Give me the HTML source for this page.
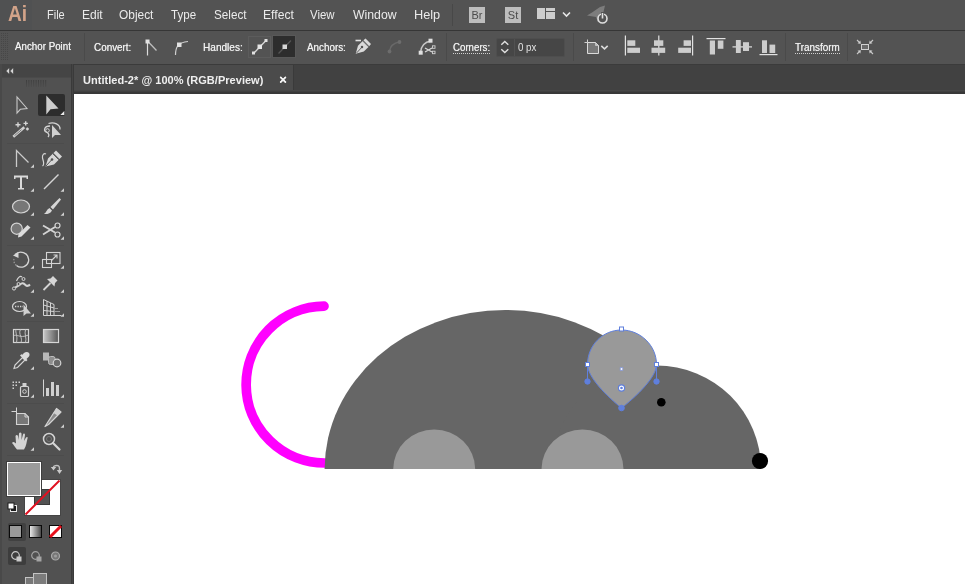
<!DOCTYPE html>
<html><head><meta charset="utf-8"><title>Untitled-2* @ 100% (RGB/Preview)</title>
<style>
*{box-sizing:border-box;margin:0;padding:0}
html,body{width:965px;height:584px;overflow:hidden;background:#535353;font-family:"Liberation Sans",sans-serif;color:#e8e8e8}
.abs,.abs *{position:absolute}
#app{position:relative;width:965px;height:584px;overflow:hidden;background:#535353;will-change:transform}
#menubar{left:0;top:0;width:965px;height:30px;background:#535353}
#menubar .mi{top:7.500px;font-size:13px;line-height:14px;white-space:nowrap;color:#ebebeb;transform-origin:0 50%}
#menuline{left:0;top:30px;width:965px;height:1px;background:#363636}
#ctrl{left:0;top:31px;width:965px;height:33px;background:#535353}
#ctrl .lb{top:9px;font-size:10.5px;line-height:13px;white-space:nowrap;color:#f2f2f2;text-shadow:0 0 0.7px #dcdcdc;transform-origin:0 50%}
#ctrl .ul{top:22px;height:0;border-bottom:1px dotted #cfcfcf}
#ctrl .lbn{text-shadow:none;color:#e2e2e2}
#ctrl .sep{top:2px;width:1px;height:28px;background:#4a4a4a}
#tabs{left:0;top:64px;width:965px;height:30px;background:#414141;border-top:1px solid #3b3b3b}
#tab{left:74px;top:0px;width:220px;height:28px;background:#4b4b4b;border-right:1px solid #3a3a3a}
#tabline{left:74px;top:90px;width:891px;height:4px;background:linear-gradient(#474747 0,#474747 1px,#404040 1px,#404040 2px,#383838 2px,#383838 4px)}
#tab .tt{left:9px;top:8px;font-size:11px;line-height:14px;font-weight:bold;color:#efefef;white-space:nowrap;letter-spacing:0.03px}
#tab .x{left:205.200px;top:7.800px;font-size:13px;line-height:14px;font-weight:bold;color:#f4f4f4;text-shadow:0 0 0.5px #fff}
#tools{left:0;top:64px;width:71px;height:520px;background:#515151}
#toolsedge{left:71px;top:64px;width:3px;height:520px;background:#444;border-left:1px solid #3a3a3a;border-right:1px solid #3a3a3a}
#canvas{left:74px;top:94px;width:891px;height:490px;background:#fff}
svg{overflow:visible}
</style></head>
<body>
<div id="app" class="abs">
  <div id="menubar">
    <div style="left:0;top:0;width:32px;height:30px;background:#505152"></div>
    <div id="ailogo" style="left:8px;top:2.700px;font-size:21.5px;line-height:22px;font-weight:bold;color:#d2a389;transform-origin:0 50%;transform:scaleX(0.89)">Ai</div>
    <div class="mi" style="left:46.95px;transform:scaleX(0.845)">File</div>
    <div class="mi" style="left:81.68px;transform:scaleX(0.924)">Edit</div>
    <div class="mi" style="left:119.40px;transform:scaleX(0.916)">Object</div>
    <div class="mi" style="left:171.30px;transform:scaleX(0.889)">Type</div>
    <div class="mi" style="left:213.50px;transform:scaleX(0.900)">Select</div>
    <div class="mi" style="left:262.67px;transform:scaleX(0.934)">Effect</div>
    <div class="mi" style="left:310.00px;transform:scaleX(0.879)">View</div>
    <div class="mi" style="left:353.20px;transform:scaleX(0.943)">Window</div>
    <div class="mi" style="left:413.52px;transform:scaleX(0.980)">Help</div>
    <div style="left:452px;top:4px;width:1px;height:22px;background:#484848"></div>
    <div style="left:469px;top:7px;width:16px;height:16px;background:#bdbdbd;color:#4c4c4c;font-size:11px;line-height:16px;text-align:center"><span style="position:static">Br</span></div>
    <div style="left:505px;top:7px;width:16px;height:16px;background:#bdbdbd;color:#4c4c4c;font-size:11px;line-height:16px;text-align:center"><span style="position:static">St</span></div>
    <svg style="left:536.500px;top:8px" width="34" height="12" viewBox="0 0 34 12">
      <rect x="0" y="0" width="8" height="11" fill="#cdcdcd"/>
      <rect x="9" y="0" width="9" height="3" fill="#cdcdcd"/>
      <rect x="9" y="4" width="9" height="7" fill="#cdcdcd"/>
      <path d="M26 4.5 L29.5 8 L33 4.5" fill="none" stroke="#e6e6e6" stroke-width="1.6"/>
    </svg>
    <svg style="left:585px;top:4px" width="26" height="22" viewBox="0 0 26 22">
      <path d="M2 11.500 L7 8.500 L15 3 L20 1.500 L18.500 8 L13 18.500 L11 13 Z" fill="#7d7d7d"/>
      <circle cx="17.500" cy="14.500" r="4.500" fill="#535353" stroke="#e0e0e0" stroke-width="1.6"/>
      <rect x="16" y="8" width="3" height="6" fill="#535353"/>
      <path d="M17.500 9 V14.500" stroke="#e0e0e0" stroke-width="1.6"/>
    </svg>
  </div>
  <div id="menuline"></div>
  <div id="ctrl">
    <svg style="left:1px;top:2px" width="8" height="28" viewBox="0 0 8 28"><g fill="#474747"><rect x="0" y="0" width="1" height="28"/><rect x="2" y="0" width="1" height="28"/><rect x="4" y="0" width="1" height="28"/><rect x="6" y="0" width="1" height="28"/></g><g fill="#535353"><rect x="0" y="1" width="8" height="1"/><rect x="0" y="3" width="8" height="1"/><rect x="0" y="5" width="8" height="1"/><rect x="0" y="7" width="8" height="1"/><rect x="0" y="9" width="8" height="1"/><rect x="0" y="11" width="8" height="1"/><rect x="0" y="13" width="8" height="1"/><rect x="0" y="15" width="8" height="1"/><rect x="0" y="17" width="8" height="1"/><rect x="0" y="19" width="8" height="1"/><rect x="0" y="21" width="8" height="1"/><rect x="0" y="23" width="8" height="1"/><rect x="0" y="25" width="8" height="1"/><rect x="0" y="27" width="8" height="1"/></g></svg>
    <div class="lb" style="left:15.40px;top:9.26px;transform:scaleX(0.930)">Anchor Point</div>
    <div class="sep" style="left:84px"></div>
    <div class="lb" style="left:94.30px;top:10.16px;transform:scaleX(0.941)">Convert:</div>
    <svg style="left:142px;top:5px" width="18" height="22" viewBox="0 0 18 22">
      <path d="M5.500 5 V19.500" stroke="#dcdcdc" stroke-width="1.200" fill="none"/>
      <path d="M5.500 5 L14.500 14.500" stroke="#bdbdbd" stroke-width="1.300" fill="none"/>
      <rect x="3.500" y="3.500" width="4" height="4" fill="#e2e2e2"/>
    </svg>
    <svg style="left:171px;top:5px" width="20" height="22" viewBox="0 0 20 22">
      <path d="M4.500 19 C4.500 11 7 6.500 17 5.500" stroke="#cfcfcf" stroke-width="1.200" fill="none"/>
      <rect x="6" y="6.500" width="4.500" height="4.500" fill="#e2e2e2"/>
    </svg>
    <div class="lb" style="left:203.04px;top:10.16px;transform:scaleX(0.960)">Handles:</div>
    <div style="left:248px;top:5px;width:23px;height:22px;border:1px solid #5c5c5c"></div>
    <svg style="left:249px;top:5px" width="22" height="22" viewBox="0 0 22 22">
      <path d="M4.500 17.500 L17 4.500" stroke="#d8d8d8" stroke-width="1.300" fill="none"/>
      <rect x="8.500" y="8.500" width="4.500" height="4.500" fill="#e6e6e6"/>
      <rect x="3" y="15.500" width="3" height="3" fill="#e0e0e0"/>
      <rect x="15.500" y="3" width="3" height="3" fill="#e0e0e0"/>
    </svg>
    <div style="left:272px;top:4px;width:24px;height:23px;background:#2d2d2d;border:1px solid #585858"></div>
    <svg style="left:274px;top:5px" width="22" height="22" viewBox="0 0 22 22">
      <path d="M4.500 17.500 L17 4.500" stroke="#555" stroke-width="1.300" fill="none"/>
      <rect x="8.500" y="8.500" width="4.500" height="4.500" fill="#d6d6d6"/>
    </svg>
    <div class="lb" style="left:307.20px;top:10.16px;transform:scaleX(0.937)">Anchors:</div>
    <svg style="left:353px;top:5px" width="24" height="24" viewBox="0 0 24 24">
      <path d="M2.500 4.500 H8" stroke="#e0e0e0" stroke-width="1.600"/>
      <g transform="translate(-1.800 0.300) scale(0.900)">
      <path d="M5 19.500 L7.500 10.500 L13 5 L19.500 11.500 L14 17 Z" fill="#dadada"/>
      <path d="M13.500 4.500 L16 2.500 L22 8.500 L20 11 Z" fill="#dadada"/>
      <path d="M6 18.500 L11.500 12.500" stroke="#535353" stroke-width="1"/>
      <circle cx="12" cy="12" r="1.400" fill="#535353"/>
      <path d="M12.800 5.200 L19.300 11.700" stroke="#535353" stroke-width="0.900"/>
      </g>
    </svg>
    <svg style="left:385px;top:5.500px" width="20" height="20" viewBox="0 0 20 20">
      <path d="M4.500 14.500 C5 9.500 8 6 14.500 5" stroke="#696969" stroke-width="1.300" fill="none"/>
      <circle cx="4.500" cy="14.500" r="1.900" fill="#6d6d6d"/>
      <circle cx="14.500" cy="5" r="1.900" fill="#6d6d6d"/>
    </svg>
    <svg style="left:415px;top:5px" width="24" height="24" viewBox="0 0 24 24">
      <path d="M5.500 16.500 C6 10.500 9.500 6 16 5" stroke="#c8c8c8" stroke-width="1.300" fill="none"/>
      <rect x="13.500" y="2.700" width="4" height="4" fill="#e0e0e0"/>
      <rect x="3.700" y="14.700" width="4" height="4" fill="#e0e0e0"/>
      <path d="M10 12 L17 16 M10 16 L17 12" stroke="#d8d8d8" stroke-width="1.300" fill="none"/>
      <rect x="17.500" y="9.800" width="2.500" height="2.500" fill="none" stroke="#d0d0d0" stroke-width="0.900"/>
      <rect x="17.500" y="15.200" width="2.500" height="2.500" fill="none" stroke="#d0d0d0" stroke-width="0.900"/>
    </svg>
    <div class="sep" style="left:446px"></div>
    <div class="ul" style="left:453px;width:37px"></div>
    <div class="ul" style="left:795px;width:45px"></div>
    <div class="lb lbu" style="left:452.90px;top:10.16px;transform:scaleX(0.923)">Corners:</div>
    <div style="left:496px;top:7px;width:69px;height:19px;background:#464646;border:1px solid #4e4e4e;border-radius:2px"></div>
    <svg style="left:499px;top:8px" width="12" height="18" viewBox="0 0 12 18">
      <path d="M2.300 5.800 L5.800 2.500 L9.300 5.800" stroke="#e0e0e0" stroke-width="1.400" fill="none"/>
      <path d="M2.300 10.200 L5.800 13.500 L9.300 10.200" stroke="#e0e0e0" stroke-width="1.400" fill="none"/>
    </svg>
    <div style="left:514px;top:8px;width:1px;height:17px;background:#515151"></div>
    <div class="lb lbn" style="left:518.00px;top:10.16px;transform:scaleX(0.925)">0 px</div>
    <div class="sep" style="left:573px"></div>
    <svg style="left:584px;top:5px" width="28" height="24" viewBox="0 0 28 24">
      <path d="M3.500 3.500 V6.500 M0.500 6.500 H3.500" stroke="#cfcfcf" stroke-width="1" fill="none"/>
      <path d="M3.500 6.500 H11.500 L14.500 9.500 V17.500 H3.500 Z" fill="#777" stroke="#dadada" stroke-width="1"/>
      <path d="M11.500 6.500 V9.500 H14.500 Z" fill="#bdbdbd" stroke="#dadada" stroke-width="0.600"/>
      <path d="M17.300 9.800 L20.500 12.800 L23.700 9.800" stroke="#dcdcdc" stroke-width="1.600" fill="none"/>
    </svg>
    <svg style="left:620px;top:0px" width="160" height="33" viewBox="0 0 160 33"><rect x="4.8" y="4.5" width="1.2" height="20.0" fill="#e2e2e2"/><rect x="7.3" y="9.3" width="8.0" height="5.6" fill="#cdcdcd"/><rect x="7.3" y="16.7" width="12.7" height="5.2" fill="#cdcdcd"/><rect x="38.2" y="4.5" width="1.2" height="20.0" fill="#e2e2e2"/><rect x="34.0" y="9.3" width="9.3" height="5.6" fill="#cdcdcd"/><rect x="31.5" y="16.7" width="13.7" height="5.2" fill="#cdcdcd"/><rect x="72.0" y="4.5" width="1.2" height="20.0" fill="#e2e2e2"/><rect x="63.6" y="9.3" width="7.4" height="5.6" fill="#cdcdcd"/><rect x="58.2" y="16.7" width="12.8" height="5.2" fill="#cdcdcd"/><rect x="86.5" y="7.0" width="19.0" height="1.2" fill="#e2e2e2"/><rect x="89.8" y="9.5" width="5.2" height="14.0" fill="#cdcdcd"/><rect x="97.8" y="9.5" width="5.6" height="8.3" fill="#cdcdcd"/><rect x="112.5" y="15.3" width="19.5" height="1.2" fill="#e2e2e2"/><rect x="115.9" y="9.0" width="4.9" height="13.0" fill="#cdcdcd"/><rect x="123.0" y="11.2" width="6.0" height="8.8" fill="#cdcdcd"/><rect x="139.5" y="23.0" width="18.0" height="1.2" fill="#e2e2e2"/><rect x="142.0" y="9.3" width="5.0" height="12.7" fill="#cdcdcd"/><rect x="149.5" y="13.6" width="5.7" height="8.4" fill="#cdcdcd"/></svg>
    <div class="sep" style="left:785px"></div>
    <div class="lb lbu" style="left:795.20px;top:10.16px;transform:scaleX(0.943)">Transform</div>
    <div class="sep" style="left:847px"></div>
    <svg style="left:856px;top:8px" width="18" height="16" viewBox="0 0 18 16">
      <rect x="5.500" y="5.500" width="7" height="5" fill="#6a6a6a" stroke="#d0d0d0" stroke-width="1"/>
      <path d="M1 1 L4.500 4.500 M17 1 L13.500 4.500 M1 15 L4.500 11.500 M17 15 L13.500 11.500" stroke="#c8c8c8" stroke-width="1.100"/>
      <path d="M1.500 4.500 H4.500 V1.500 Z M16.500 4.500 H13.500 V1.500 Z M1.500 11.500 H4.500 V14.500 Z M16.500 11.500 H13.500 V14.500 Z" fill="#d0d0d0"/>
    </svg>
  </div>
  <div id="tabs">
    <div id="tab"><div class="tt">Untitled-2* @ 100% (RGB/Preview)</div><div class="x">×</div></div>
  </div>
  <div id="tools">
    <div style="left:0;top:0;width:71px;height:13px;background:#454545"></div>
    <svg style="left:5px;top:4px" width="10" height="8" viewBox="0 0 10 8"><path d="M4 0.500 L1.500 3 L4 5.500 Z M8 0.500 L5.500 3 L8 5.500 Z" fill="#d8d8d8" stroke="#d8d8d8" stroke-width="0.300"/></svg>
    <div style="left:0;top:13px;width:72px;height:1px;background:#4a4a4a"></div>
    <svg style="left:26px;top:16px" width="22" height="7" viewBox="0 0 22 7"><defs><linearGradient id="grp" x1="0" y1="0" x2="0" y2="1"><stop offset="0" stop-color="#3e3e3e"/><stop offset="1" stop-color="#4c4c4c"/></linearGradient></defs><rect x="0.0" y="0" width="1" height="7" fill="url(#grp)"/><rect x="2.4" y="0" width="1" height="7" fill="url(#grp)"/><rect x="4.8" y="0" width="1" height="7" fill="url(#grp)"/><rect x="7.2" y="0" width="1" height="7" fill="url(#grp)"/><rect x="9.6" y="0" width="1" height="7" fill="url(#grp)"/><rect x="12.0" y="0" width="1" height="7" fill="url(#grp)"/><rect x="14.4" y="0" width="1" height="7" fill="url(#grp)"/><rect x="16.8" y="0" width="1" height="7" fill="url(#grp)"/><rect x="19.2" y="0" width="1" height="7" fill="url(#grp)"/></svg>
    <div style="left:0;top:0;width:2px;height:520px;background:#494949"></div>
    <div style="left:37.500px;top:30px;width:27px;height:21.500px;background:#2d2d2d;border-radius:2px"></div>
    <svg style="left:6px;top:28px" width="30" height="26" viewBox="0 0 30 26"><path d="M11 5 V21 L14.300 17.300 L21 16.500 Z" fill="none" stroke="#c8c8c8" stroke-width="1.100" stroke-linejoin="miter"/></svg>
    <svg style="left:36px;top:28px" width="30" height="26" viewBox="0 0 30 26"><path d="M10.300 3.500 V22.500 L14.500 17.300 L22.500 16.500 Z" fill="#cdcdcd"/><path d="M28.300 19 V23 H24.300 Z" fill="#eaeaea"/></svg>
    <svg style="left:6px;top:53px" width="30" height="26" viewBox="0 0 30 26"><path d="M7.300 19.700 L18.300 10.300" stroke="#d4d4d4" stroke-width="2.500" stroke-linecap="butt"/><path d="M8.500 18.700 L15.500 12.700" stroke="#535353" stroke-width="0.700"/><path d="M12 5.200 V10.200 M9.500 7.700 H14.500 M19.700 4.200 V8.600 M17.500 6.400 H21.900 M21.400 10.500 V13.500 M19.900 12 H22.900" stroke="#d4d4d4" stroke-width="1.400"/></svg>
    <svg style="left:36px;top:53px" width="30" height="26" viewBox="0 0 30 26"><path d="M14 9 C8 9 7 14 11 15.500 C13 16.500 13.500 18.500 12 20 M12.500 6.500 C18 4.500 24.500 7.500 24 12.500" fill="none" stroke="#d4d4d4" stroke-width="1.300"/><circle cx="11.500" cy="13.500" r="1.800" fill="none" stroke="#d4d4d4" stroke-width="1"/><path d="M16 8 V21 L19 18 H25 Z" fill="#d0d0d0"/></svg>
    <svg style="left:6px;top:81px" width="30" height="26" viewBox="0 0 30 26"><path d="M10.500 22 V5.500 L22.500 17.500" fill="none" stroke="#cbcbcb" stroke-width="1.300" stroke-linejoin="miter"/><path d="M28 19.3 V22.8 H24.5 Z" fill="#d0d0d0"/></svg>
    <svg style="left:36px;top:81px" width="30" height="26" viewBox="0 0 30 26"><path d="M6.500 21 C9 19.500 7 15 6.500 13 C6 9.500 8 8 10 9" fill="none" stroke="#d4d4d4" stroke-width="1.200"/><path d="M9.500 21.500 L12 13.500 L17 8.500 L23 14.500 L18 19.500 Z" fill="#d6d6d6"/><path d="M17.500 8 L20 5.500 L26 11.500 L23.500 14 Z" fill="#d6d6d6"/><path d="M10 21 L15.500 15" stroke="#535353" stroke-width="1"/><circle cx="16" cy="14.500" r="1.300" fill="#535353"/><path d="M16.800 8.800 L22.800 14.800" stroke="#535353" stroke-width="0.900"/></svg>
    <svg style="left:6px;top:105px" width="30" height="26" viewBox="0 0 30 26"><path d="M8 6.500 H22 V10 H20.500 V8.500 H16 V19 H18 V20.500 H12 V19 H14 V8.500 H9.500 V10 H8 Z" fill="#dadada"/><path d="M28 19.3 V22.8 H24.5 Z" fill="#d0d0d0"/></svg>
    <svg style="left:36px;top:105px" width="30" height="26" viewBox="0 0 30 26"><path d="M8 20 L22.500 5.500" stroke="#d4d4d4" stroke-width="1.500"/><path d="M28 19.3 V22.8 H24.5 Z" fill="#d0d0d0"/></svg>
    <svg style="left:6px;top:129px" width="30" height="26" viewBox="0 0 30 26"><ellipse cx="15" cy="13.500" rx="8.500" ry="6.500" fill="#777" stroke="#d4d4d4" stroke-width="1.200"/><path d="M28 19.3 V22.8 H24.5 Z" fill="#d0d0d0"/></svg>
    <svg style="left:36px;top:129px" width="30" height="26" viewBox="0 0 30 26"><path d="M23.500 5 L25 6.500 L17 16.500 L14.500 14 Z" fill="#d6d6d6"/><path d="M13.500 15 L16 17.500 C14.500 20.500 11 21.500 8 21 C10.500 19.500 10.500 16.500 13.500 15 Z" fill="#d6d6d6"/><path d="M28 19.3 V22.8 H24.5 Z" fill="#d0d0d0"/></svg>
    <svg style="left:6px;top:153px" width="30" height="26" viewBox="0 0 30 26"><circle cx="10.700" cy="11.700" r="5.600" fill="#777" stroke="#d4d4d4" stroke-width="1.200"/><path d="M12 20.500 L12.500 17 L21.500 8 L24.500 10.500 L15.500 19.500 Z" fill="#dcdcdc"/><path d="M28 19.3 V22.8 H24.5 Z" fill="#d0d0d0"/></svg>
    <svg style="left:36px;top:153px" width="30" height="26" viewBox="0 0 30 26"><path d="M7 8.500 L19 15.500 M7 17.500 L19 10" stroke="#d4d4d4" stroke-width="1.800" fill="none"/><circle cx="21.500" cy="8.500" r="2.500" fill="none" stroke="#d4d4d4" stroke-width="1.200"/><circle cx="21.500" cy="17.500" r="2.500" fill="none" stroke="#d4d4d4" stroke-width="1.200"/><path d="M28 19.3 V22.8 H24.5 Z" fill="#d0d0d0"/></svg>
    <svg style="left:6px;top:182px" width="30" height="26" viewBox="0 0 30 26"><path d="M9 8.500 C15 3 24 8 22.500 15.500 C21.500 20.500 15 23 10.500 19.500" fill="none" stroke="#d4d4d4" stroke-width="1.300" stroke-dasharray="9 0"/><path d="M7 9.500 L12.500 6 L12.500 12 Z" fill="#d6d6d6"/><path d="M10.500 19.500 C8 17.500 7.500 15 8 13" fill="none" stroke="#9a9a9a" stroke-width="1.200" stroke-dasharray="1.500 1.500"/><path d="M28 19.3 V22.8 H24.5 Z" fill="#d0d0d0"/></svg>
    <svg style="left:36px;top:182px" width="30" height="26" viewBox="0 0 30 26"><rect x="6.500" y="13.500" width="9" height="8" fill="none" stroke="#d4d4d4" stroke-width="1.100"/><rect x="10.500" y="6.500" width="13.500" height="11" fill="none" stroke="#d4d4d4" stroke-width="1.100"/><path d="M15.500 14.500 L20.500 9.500 M17.500 9 H21 V12.500" fill="none" stroke="#d4d4d4" stroke-width="1.100"/><path d="M28 19.3 V22.8 H24.5 Z" fill="#d0d0d0"/></svg>
    <svg style="left:6px;top:206px" width="30" height="26" viewBox="0 0 30 26"><path d="M9 18 C11 15.500 12 16.500 14 14.500 C16 12.500 17.500 13 19.500 15 C21 16.500 22.500 16 24 14.500" fill="none" stroke="#d4d4d4" stroke-width="2"/><path d="M10.500 11 C12 7.500 14 5.500 16 7" fill="none" stroke="#d4d4d4" stroke-width="1.200"/><circle cx="8" cy="18.500" r="1.600" fill="#535353" stroke="#d4d4d4" stroke-width="1"/><circle cx="12.500" cy="14" r="1.500" fill="#535353" stroke="#d4d4d4" stroke-width="1"/><circle cx="17.500" cy="9" r="1.500" fill="#535353" stroke="#d4d4d4" stroke-width="1"/><path d="M28 19.3 V22.8 H24.5 Z" fill="#d0d0d0"/></svg>
    <svg style="left:36px;top:206px" width="30" height="26" viewBox="0 0 30 26"><path d="M14.500 8.500 L17 6 L21.500 10.500 L19 13 L18.500 16.500 L11 9 Z" fill="#d6d6d6"/><path d="M14.500 13 L7.500 20" stroke="#d4d4d4" stroke-width="1.800"/><path d="M28 19.3 V22.8 H24.5 Z" fill="#d0d0d0"/></svg>
    <svg style="left:6px;top:230px" width="30" height="26" viewBox="0 0 30 26"><ellipse cx="13.500" cy="12.500" rx="7" ry="5" fill="none" stroke="#d4d4d4" stroke-width="1.200"/><path d="M9 12.500 H17" stroke="#d4d4d4" stroke-width="1.300" stroke-dasharray="1.300 1.200"/><path d="M17.500 10.500 V22 L20.500 19.500 H25 Z" fill="#d0d0d0"/><path d="M28 19.3 V22.8 H24.5 Z" fill="#d0d0d0"/></svg>
    <svg style="left:36px;top:230px" width="30" height="26" viewBox="0 0 30 26"><path d="M7.500 5.500 V21.500 H25.500 M7.500 5.500 L18 10.500 V21.500 M7.500 11 L18 14 M7.500 16.500 L18 17.500 M11 7 V21.500 M14.500 9 V21.500" fill="none" stroke="#d4d4d4" stroke-width="1"/><path d="M18 17.500 H24 M18 14.500 H22" fill="none" stroke="#9c9c9c" stroke-width="1"/><path d="M28 19.3 V22.8 H24.5 Z" fill="#d0d0d0"/></svg>
    <svg style="left:6px;top:259px" width="30" height="26" viewBox="0 0 30 26"><rect x="7.500" y="6.500" width="15" height="13" fill="none" stroke="#d4d4d4" stroke-width="1.200"/><path d="M7.500 13 C11 10 13 16 22.500 12 M14.500 6.500 C12 11 17 15 15 19.500 M10 6.500 C9 10 12 12 10.500 19.500 M19.500 6.500 C18 11 21 15 19.500 19.500" fill="none" stroke="#c0c0c0" stroke-width="1"/></svg>
    <svg style="left:36px;top:259px" width="30" height="26" viewBox="0 0 30 26"><defs><linearGradient id="gr1" x1="0" x2="1"><stop offset="0" stop-color="#c8c8c8"/><stop offset="1" stop-color="#555"/></linearGradient></defs><rect x="7.500" y="6.500" width="15" height="13" fill="url(#gr1)" stroke="#d6d6d6" stroke-width="1.200"/></svg>
    <svg style="left:6px;top:283px" width="30" height="26" viewBox="0 0 30 26"><path d="M8 21.500 L9 18 L16.500 10.500 L19 13 L11.500 20.500 Z" fill="none" stroke="#d4d4d4" stroke-width="1.200"/><path d="M16 8 L18 6 C19.500 4.500 22 4.500 23 6 C24 7.500 23.500 9 22.500 10 L20.500 12 L21.500 13 L20 14.500 L14 8.500 L15.500 7 Z" fill="#d8d8d8"/><path d="M28 19.3 V22.8 H24.5 Z" fill="#d0d0d0"/></svg>
    <svg style="left:36px;top:283px" width="30" height="26" viewBox="0 0 30 26"><rect x="7" y="5.500" width="6" height="8" fill="#b8b8b8"/><rect x="12.500" y="9.500" width="6.500" height="8" rx="2" fill="#8e8e8e" stroke="#bdbdbd" stroke-width="1"/><circle cx="21" cy="16" r="3.800" fill="#6a6a6a" stroke="#d4d4d4" stroke-width="1.200"/></svg>
    <svg style="left:6px;top:311px" width="30" height="26" viewBox="0 0 30 26"><rect x="14.500" y="11.500" width="8" height="10" rx="1" fill="none" stroke="#d4d4d4" stroke-width="1.200"/><rect x="16.500" y="8" width="4" height="3" fill="#d0d0d0"/><circle cx="18.500" cy="16.500" r="1.800" fill="none" stroke="#d4d4d4" stroke-width="1"/><g fill="#d0d0d0"><rect x="6.500" y="6.500" width="1.500" height="1.500"/><rect x="9.500" y="6.500" width="1.500" height="1.500"/><rect x="12.500" y="6.500" width="1.500" height="1.500"/><rect x="6.500" y="9.500" width="1.500" height="1.500"/><rect x="9.500" y="9.500" width="1.500" height="1.500"/><rect x="6.500" y="12.500" width="1.500" height="1.500"/></g><path d="M28 19.3 V22.8 H24.5 Z" fill="#d0d0d0"/></svg>
    <svg style="left:36px;top:311px" width="30" height="26" viewBox="0 0 30 26"><path d="M7.500 4.500 V21.500" stroke="#d4d4d4" stroke-width="1"/><rect x="10" y="13" width="3" height="8" fill="#d0d0d0"/><rect x="15" y="7" width="3" height="14" fill="#d0d0d0"/><rect x="20" y="10" width="3" height="11" fill="#d0d0d0"/><path d="M28 19.3 V22.8 H24.5 Z" fill="#d0d0d0"/></svg>
    <svg style="left:6px;top:341px" width="30" height="26" viewBox="0 0 30 26"><path d="M10.500 2.500 V8 M5.500 6.500 H11" stroke="#d4d4d4" stroke-width="1" fill="none"/><path d="M10.500 8.500 H19 L22.500 12 V19.500 H10.500 Z" fill="#777" stroke="#d4d4d4" stroke-width="1.100"/><path d="M19 8.500 V12 H22.500" fill="none" stroke="#d4d4d4" stroke-width="1"/></svg>
    <svg style="left:36px;top:341px" width="30" height="26" viewBox="0 0 30 26"><path d="M20.500 3.500 L25 7 L12.500 19.500 L9 21.500 Z" fill="#8a8a8a" stroke="#d4d4d4" stroke-width="1.200" stroke-linejoin="round"/><path d="M20.500 3.500 L25 7 L21.500 10.500 L17.500 8 Z" fill="#d0d0d0"/><path d="M28 19.3 V22.8 H24.5 Z" fill="#d0d0d0"/></svg>
    <svg style="left:6px;top:364px" width="30" height="26" viewBox="0 0 30 26"><path d="M11 21.500 C9 19 7.500 16.500 6 15 C7 13.500 8.500 14 10 15.500 L9.500 8 C10 6.500 11.500 6.500 12 8 L12.500 12 L13 5.500 C13.500 4 15 4 15.500 5.500 L15.500 12 L17 6.500 C17.500 5 19 5.500 19 7 L18 13 L20 9.500 C21 8.500 22 9 21.500 10.500 C20.500 14 20.500 18 18 21.500 Z" fill="#d4d4d4"/><path d="M28 19.3 V22.8 H24.5 Z" fill="#d0d0d0"/></svg>
    <svg style="left:36px;top:364px" width="30" height="26" viewBox="0 0 30 26"><circle cx="13" cy="11" r="5.500" fill="none" stroke="#d4d4d4" stroke-width="1.500"/><circle cx="13" cy="11" r="2.500" fill="none" stroke="#777" stroke-width="1"/><path d="M17 15 L23.500 21.500" stroke="#d4d4d4" stroke-width="2.200" stroke-linecap="round"/></svg>
    <div style="left:23.500px;top:414.500px;width:37px;height:37px;background:#fff;border:1px solid #454545"></div>
    <div style="left:34px;top:425px;width:16px;height:16px;background:#535353;border:1px solid #3a3a3a"></div>
    <svg style="left:24.500px;top:415.500px" width="35" height="35" viewBox="0 0 35 35"><path d="M0.500 34.500 L34.500 0.500" stroke="#e01020" stroke-width="2"/></svg>
    <div style="left:6px;top:397px;width:36px;height:36px;background:#3e3e3e"></div>
    <div style="left:7px;top:398px;width:34px;height:34px;background:#9b9b9b;border:1px solid #fff"></div>
    <svg style="left:49.5px;top:398.5px" width="14" height="14" viewBox="0 0 14 14"><path d="M3.500 4.500 C3.500 2.500 5 2.500 7 2.500 C9.500 2.500 9.500 4 9.500 7.500" fill="none" stroke="#c0c0c0" stroke-width="1.400"/><path d="M0.800 4 H6.200 L3.500 7.500 Z M6.800 7 H12.200 L9.500 11 Z" fill="#c8c8c8"/></svg>
    <svg style="left:5px;top:436px" width="14" height="14" viewBox="0 0 14 14"><rect x="5.500" y="5.500" width="6" height="6" fill="#1c1c1c" stroke="#e8e8e8" stroke-width="1"/><rect x="3" y="3" width="6" height="6" fill="#fff" stroke="#1c1c1c" stroke-width="1"/></svg>
    <div style="left:7.500px;top:458.500px;width:18px;height:18px;background:#414141;border-radius:2px"></div>
    <div style="left:9px;top:460.500px;width:13px;height:13px;background:#9a9a9a;border:1px solid #0a0a0a"></div>
    <div style="left:29px;top:460.500px;width:13px;height:13px;background:linear-gradient(90deg,#e8e8e8,#4a4a4a);border:1px solid #0a0a0a"></div>
    <div style="left:49px;top:460.500px;width:13px;height:13px;background:#fff;border:1px solid #0a0a0a;overflow:hidden"></div>
    <svg style="left:50px;top:461.500px" width="11" height="11" viewBox="0 0 11 11"><path d="M0 11 L11 0" stroke="#e8101c" stroke-width="3"/></svg>
    <div style="left:7.500px;top:483px;width:18px;height:17.500px;background:#3d3d3d;border-radius:2px"></div>
    <svg style="left:10px;top:486px" width="14" height="14" viewBox="0 0 14 14"><circle cx="5.500" cy="5.500" r="3.800" fill="none" stroke="#cacaca" stroke-width="1.200"/><rect x="6.500" y="6.500" width="5" height="5" fill="#cacaca"/></svg>
    <svg style="left:30px;top:486px" width="14" height="14" viewBox="0 0 14 14"><circle cx="5.500" cy="5.500" r="3.800" fill="none" stroke="#a4a4a4" stroke-width="1.200"/><rect x="6.500" y="6.500" width="5" height="5" fill="#a4a4a4"/></svg>
    <svg style="left:49px;top:486px" width="14" height="14" viewBox="0 0 14 14"><circle cx="6.500" cy="6" r="4" fill="#777" stroke="#a8a8a8" stroke-width="1.200"/><circle cx="6.500" cy="6" r="1.600" fill="#9c9c9c"/></svg>
    <svg style="left:24px;top:507.5px" width="26" height="13" viewBox="0 0 26 13"><rect x="1.500" y="5.500" width="9" height="9" fill="#777" stroke="#c4c4c4" stroke-width="1"/><rect x="9.500" y="1.500" width="13" height="13" fill="#7c7c7c" stroke="#c4c4c4" stroke-width="1"/></svg>
    <div style="left:7px;top:79px;width:57px;height:1px;background:#4c4c4c"></div>
    <div style="left:7px;top:180.5px;width:57px;height:1px;background:#4c4c4c"></div>
    <div style="left:7px;top:257px;width:57px;height:1px;background:#4c4c4c"></div>
    <div style="left:7px;top:338.5px;width:57px;height:1px;background:#4c4c4c"></div>
    <div style="left:7px;top:391px;width:57px;height:1px;background:#4c4c4c"></div>
  </div>
  <div id="toolsedge"></div>
  <div id="tabline"></div>
  <div id="canvas">
    <svg style="left:-74px;top:-94px" width="965" height="584" viewBox="0 0 965 584">
      <path d="M324 306.200 A78.600 78.400 0 0 0 325.500 463" fill="none" stroke="#ff00ff" stroke-width="9.700" stroke-linecap="round"/>
      <path d="M324.600 469 A180.700 159 0 0 1 686 469 Z" fill="#666666"/>
      <path d="M552 469 A104.500 103.500 0 0 1 761 469 Z" fill="#666666"/>
      <path d="M393.200 469 A41 39.500 0 0 1 475.200 469 Z" fill="#999999"/>
      <path d="M541.500 469 A41 39.500 0 0 1 623.500 469 Z" fill="#999999"/>
      <circle cx="661.300" cy="402.200" r="4.300" fill="#000"/>
      <circle cx="760" cy="461" r="8.100" fill="#000"/>
      <path d="M621.500 330 C640.500 330 656.500 345.500 656.500 364.500 C656.500 381.500 621.500 408 621.500 408 C621.500 408 587.500 381.500 587.500 364.500 C587.500 345.500 602.500 330 621.500 330 Z" fill="#999999" stroke="#5f7fdc" stroke-width="1"/>
      <g stroke="#5f7fdc" stroke-width="1" fill="#5f7fdc">
        <path d="M587.500 364 V381" fill="none"/>
        <path d="M656.500 364 V381" fill="none"/>
        <circle cx="587.500" cy="381.500" r="2.700"/>
        <circle cx="656.500" cy="381.500" r="2.700"/>
        <circle cx="621.500" cy="408" r="2.800"/>
      </g>
      <g fill="#fff" stroke="#5f7fdc" stroke-width="1">
        <rect x="619.500" y="327" width="4" height="4"/>
        <rect x="585.500" y="362.500" width="4" height="4"/>
        <rect x="654.500" y="362.500" width="4" height="4"/>
        <rect x="620.200" y="367.700" width="2.600" height="2.600" stroke="#8296dc" stroke-width="0.800"/>
        <circle cx="621.500" cy="388" r="3.100" fill="#fff" stroke="#5f7fdc" stroke-width="1.200"/>
        <circle cx="621.500" cy="388" r="1.300" fill="#5f7fdc" stroke="none"/>
      </g>
    </svg>
  </div>
</div>
</body></html>
